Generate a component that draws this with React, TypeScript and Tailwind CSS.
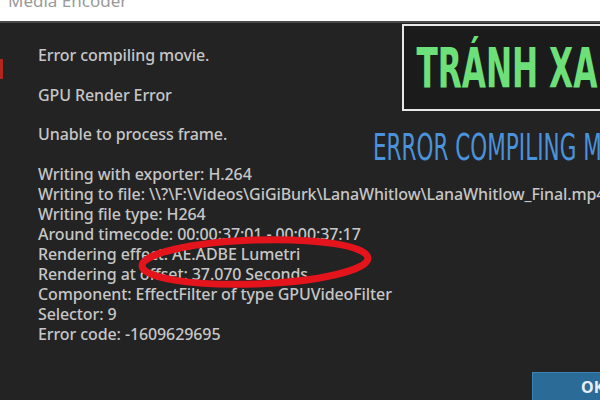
import React from 'react';

const lines = [
  'Writing with exporter: H.264',
  'Writing to file: \\\\?\\F:\\Videos\\GiGiBurk\\LanaWhitlow\\LanaWhitlow_Final.mp4',
  'Writing file type: H264',
  'Around timecode: 00:00:37:01 - 00:00:37:17',
  'Rendering effect: AE.ADBE Lumetri',
  'Rendering at offset: 37.070 Seconds',
  'Component: EffectFilter of type GPUVideoFilter',
  'Selector: 9',
  'Error code: -1609629695',
];

export default function App() {
  return (
    <div className="w-[600px] h-[400px] overflow-hidden bg-[#232323] flex flex-col" style={{ fontFamily: '"Noto Sans", "Open Sans", sans-serif' }}>
      {/* title bar */}
      <div className="h-[21px] shrink-0 bg-white overflow-hidden border-b-2 border-[#4a4a4a] box-content">
        <div className="-mt-[11px] pl-[8px] text-[17px] text-[#9a9a9a] leading-[24px] whitespace-nowrap">Media Encoder</div>
      </div>

      <div className="relative flex-1 flex flex-col">
        {/* red error icon, cut at left edge */}
        <div className="absolute left-0 top-[36px] w-[3px] h-[20px] bg-[#b3261e]" />

        <div className="pl-[38px] pt-[22px] text-[#c6c6c6] text-[16px] font-medium whitespace-nowrap tracking-[-0.1px]">
          <div className="leading-[20px]">Error compiling movie.</div>
          <div className="leading-[20px] mt-[20px]">GPU Render Error</div>
          <div className="leading-[20px] mt-[19px]">Unable to process frame.</div>
          <div className="mt-[20px] flex flex-col">
            {lines.map((l) => (
              <div key={l} className="leading-[20px]">{l}</div>
            ))}
          </div>
        </div>

        {/* watermark overlay */}
        <div className="absolute left-[402px] top-[1px] w-[220px] h-[87px] border-2 border-[#e8e8e8] bg-[#1b1b1b] overflow-hidden">
          <div className="pl-[20px] pt-[10px] origin-left scale-x-[0.62] text-[#6ee07a] font-bold text-[56px] leading-[64px] whitespace-nowrap" style={{ fontFamily: '"DejaVu Sans Condensed", "Liberation Sans Narrow", "Liberation Sans", sans-serif' }}>
            TRÁNH XA
          </div>
        </div>
        <div className="absolute left-[373px] top-[104px] origin-left scale-x-[0.63] text-[#4a93dc] text-[38px] leading-[40px] whitespace-nowrap" style={{ fontFamily: '"DejaVu Sans Condensed", "Liberation Sans Narrow", "Liberation Sans", sans-serif' }}>
          ERROR COMPILING MOVIE
        </div>

        {/* red ellipse marking */}
        <svg className="absolute left-[130px] top-[208px]" width="250" height="64" viewBox="0 0 250 64">
          <ellipse cx="125" cy="31" rx="113" ry="22" transform="rotate(-2 125 31)" fill="none" stroke="#e3141c" strokeWidth="7" />
        </svg>

        <div className="mt-auto flex justify-end -mr-[30px]">
          <div className="w-[98px] h-[28px] bg-[#2b6b98] border-t border-l border-[#3d83b5] text-[#e8eef3] text-[16px] font-bold leading-[28px] pl-[48px]">OK</div>
        </div>
      </div>
    </div>
  );
}
